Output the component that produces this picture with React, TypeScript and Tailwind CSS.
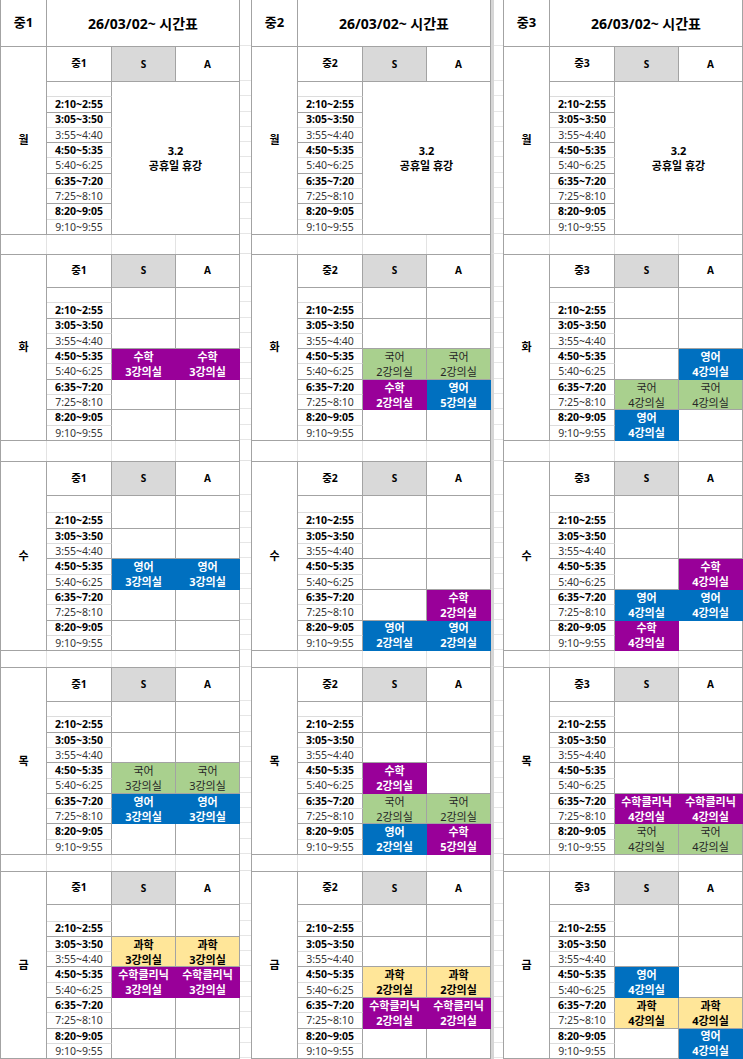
import React from "react";

type Color = "p" | "b" | "g" | "y";
interface ILesson {
  s: string;
  r: string;
  c: Color;
}
type Slot = ILesson | null;
type DaySched = "holiday" | { S: Slot[]; A: Slot[] };

const P = (s: string, r: string): ILesson => ({ s, r, c: "p" });
const B = (s: string, r: string): ILesson => ({ s, r, c: "b" });
const G = (s: string, r: string): ILesson => ({ s, r, c: "g" });
const Y = (s: string, r: string): ILesson => ({ s, r, c: "y" });
const _ = null;

const DAYS = [
  { day: "월", rows: "grid-rows-[35px_15.3px_repeat(9,15.3px)]", spacer: "h-[19px]" },
  { day: "화", rows: "grid-rows-[33px_15.3px_repeat(9,15.3px)]", spacer: "h-[20px]" },
  { day: "수", rows: "grid-rows-[34px_17.5px_repeat(9,15.3px)]", spacer: "h-[16px]" },
  { day: "목", rows: "grid-rows-[34px_15.3px_repeat(9,15.3px)]", spacer: "h-[16px]" },
  { day: "금", rows: "grid-rows-[33px_16.5px_repeat(9,15.3px)]", spacer: "" },
];

const TIMES = [
  "2:10~2:55",
  "3:05~3:50",
  "3:55~4:40",
  "4:50~5:35",
  "5:40~6:25",
  "6:35~7:20",
  "7:25~8:10",
  "8:20~9:05",
  "9:10~9:55",
];
const BOLD = [true, true, false, true, false, true, false, true, false];

const ROW_START = [
  "",
  "row-start-1",
  "row-start-2",
  "row-start-3",
  "row-start-4",
  "row-start-5",
  "row-start-6",
  "row-start-7",
  "row-start-8",
  "row-start-9",
  "row-start-10",
  "row-start-11",
];

const SCHED: Record<string, DaySched[]> = {
  중1: [
    "holiday",
    { S: [_, _, P("수학", "3강의실"), _, _], A: [_, _, P("수학", "3강의실"), _, _] },
    { S: [_, _, B("영어", "3강의실"), _, _], A: [_, _, B("영어", "3강의실"), _, _] },
    {
      S: [_, _, G("국어", "3강의실"), B("영어", "3강의실"), _],
      A: [_, _, G("국어", "3강의실"), B("영어", "3강의실"), _],
    },
    {
      S: [_, Y("과학", "3강의실"), P("수학클리닉", "3강의실"), _, _],
      A: [_, Y("과학", "3강의실"), P("수학클리닉", "3강의실"), _, _],
    },
  ],
  중2: [
    "holiday",
    {
      S: [_, _, G("국어", "2강의실"), P("수학", "2강의실"), _],
      A: [_, _, G("국어", "2강의실"), B("영어", "5강의실"), _],
    },
    {
      S: [_, _, _, _, B("영어", "2강의실")],
      A: [_, _, _, P("수학", "2강의실"), B("영어", "2강의실")],
    },
    {
      S: [_, _, P("수학", "2강의실"), G("국어", "2강의실"), B("영어", "2강의실")],
      A: [_, _, _, G("국어", "2강의실"), P("수학", "5강의실")],
    },
    {
      S: [_, _, Y("과학", "2강의실"), P("수학클리닉", "2강의실"), _],
      A: [_, _, Y("과학", "2강의실"), P("수학클리닉", "2강의실"), _],
    },
  ],
  중3: [
    "holiday",
    {
      S: [_, _, _, G("국어", "4강의실"), B("영어", "4강의실")],
      A: [_, _, B("영어", "4강의실"), G("국어", "4강의실"), _],
    },
    {
      S: [_, _, _, B("영어", "4강의실"), P("수학", "4강의실")],
      A: [_, _, P("수학", "4강의실"), B("영어", "4강의실"), _],
    },
    {
      S: [_, _, _, P("수학클리닉", "4강의실"), G("국어", "4강의실")],
      A: [_, _, _, P("수학클리닉", "4강의실"), G("국어", "4강의실")],
    },
    {
      S: [_, _, B("영어", "4강의실"), Y("과학", "4강의실"), _],
      A: [_, _, _, Y("과학", "4강의실"), B("영어", "4강의실")],
    },
  ],
};

const COLOR: Record<Color, string> = {
  p: "bg-[#990099] text-white font-bold border-[#990099]",
  b: "bg-[#0070c0] text-white font-bold border-[#0070c0]",
  g: "bg-[#a9d08e] text-[#262626] border-[#a3a3a3]",
  y: "bg-[#ffe699] text-black font-bold border-[#a3a3a3]",
};

function SlotCell({ lesson, col, k }: { lesson: Slot; col: string; k: number }) {
  const base = `${col} ${ROW_START[2 + 2 * k]} row-span-2 border-r border-b flex flex-col items-center justify-center text-[11px] leading-[15px]`;
  if (!lesson) return <div className={`${base} border-[#a3a3a3] bg-white`} />;
  return (
    <div className={`${base} ${COLOR[lesson.c]}`}>
      <span>{lesson.s}</span>
      <span>{lesson.r}</span>
    </div>
  );
}

// spreadsheet gridlines between the three tables
function Gap({ rows, count, strip }: { rows: string; count: number; strip?: boolean }) {
  return (
    <div className={`grid ${rows} ${strip ? "w-[12px] border-l-[3px] border-l-[#d6d6d6]" : "w-[11px]"}`}>
      {Array.from({ length: count }).map((_, i) => (
        <div key={i} className="border-b border-[#e6e6e6]" />
      ))}
    </div>
  );
}

function DayBlock({ grade, di }: { grade: string; di: number }) {
  const d = DAYS[di];
  const sched = SCHED[grade][di];
  return (
    <div className={`grid w-[240px] grid-cols-[46px_65px_64px_64px] ${d.rows} border-l border-t border-[#a3a3a3]`}>
      <div className="col-start-1 row-start-1 row-span-11 flex items-center justify-center border-r border-b border-[#a3a3a3] text-[11px] font-bold">
        {d.day}
      </div>
      <div className="col-start-2 row-start-1 flex items-center justify-center border-r border-b border-[#a3a3a3] text-[10.5px] font-bold">
        {grade}
      </div>
      <div className="col-start-3 row-start-1 flex items-center justify-center border-r border-b border-[#a3a3a3] bg-[#d9d9d9] text-[10px] font-bold">
        S
      </div>
      <div className="col-start-4 row-start-1 flex items-center justify-center border-r border-b border-[#a3a3a3] text-[10px] font-bold">
        A
      </div>
      <div className="col-start-2 row-start-2 border-r border-b border-r-[#a3a3a3] border-b-[#dcdcdc]" />
      {TIMES.map((t, i) => (
        <div
          key={t}
          className={`col-start-2 ${ROW_START[i + 3]} flex items-center justify-center border-r border-b border-r-[#a3a3a3] ${
            i % 2 === 0 ? "border-b-[#a3a3a3]" : "border-b-[#dcdcdc]"
          } text-[10.5px] leading-none ${BOLD[i] ? "font-bold text-black" : "text-[#333]"}`}
        >
          {t}
        </div>
      ))}
      {sched === "holiday" ? (
        <div className="col-start-3 col-span-2 row-start-2 row-span-10 flex flex-col items-center justify-center border-r border-b border-[#a3a3a3] text-[11px] font-bold leading-[15px]">
          <span>3.2</span>
          <span>공휴일 휴강</span>
        </div>
      ) : (
        <>
          {sched.S.map((l, k) => (
            <SlotCell key={`s${k}`} lesson={l} col="col-start-3" k={k} />
          ))}
          {sched.A.map((l, k) => (
            <SlotCell key={`a${k}`} lesson={l} col="col-start-4" k={k} />
          ))}
        </>
      )}
    </div>
  );
}

function SpacerBlock() {
  return (
    <div className="flex w-[240px] border-l border-r border-[#a3a3a3]">
      <div className="w-[46px] border-r border-[#e3e3e3]" />
      <div className="w-[65px] border-r border-[#e3e3e3]" />
      <div className="w-[64px] border-r border-[#e3e3e3]" />
      <div className="w-[63px]" />
    </div>
  );
}

function HeaderBlock({ grade }: { grade: string }) {
  return (
    <div className="flex h-[46px] w-[240px] border-l border-r border-[#a3a3a3]">
      <div className="flex w-[46px] items-center justify-center border-r border-[#a3a3a3] text-[13px] font-bold">
        {grade}
      </div>
      <div className="flex flex-1 items-center justify-center text-[14px] font-bold">26/03/02~ 시간표</div>
    </div>
  );
}

export default function App() {
  return (
    <div className="h-[1059px] w-[743px] overflow-hidden bg-white font-['Noto_Sans','Noto_Sans_CJK_KR',sans-serif] text-black">
      <div className="flex h-[46px]">
        <HeaderBlock grade="중1" />
        <Gap rows="grid-rows-[46px]" count={1} />
        <HeaderBlock grade="중2" />
        <Gap rows="grid-rows-[46px]" count={1} strip />
        <HeaderBlock grade="중3" />
      </div>
      {DAYS.map((d, di) => (
        <React.Fragment key={d.day}>
          <div className="flex">
            <DayBlock grade="중1" di={di} />
            <Gap rows={d.rows} count={11} />
            <DayBlock grade="중2" di={di} />
            <Gap rows={d.rows} count={11} strip />
            <DayBlock grade="중3" di={di} />
          </div>
          {d.spacer && (
            <div className={`flex ${d.spacer}`}>
              <SpacerBlock />
              <div className="w-[11px] border-b border-[#e3e3e3]" />
              <SpacerBlock />
              <div className="w-[12px] border-b border-l-[3px] border-[#e3e3e3] border-l-[#d6d6d6]" />
              <SpacerBlock />
            </div>
          )}
        </React.Fragment>
      ))}
    </div>
  );
}
